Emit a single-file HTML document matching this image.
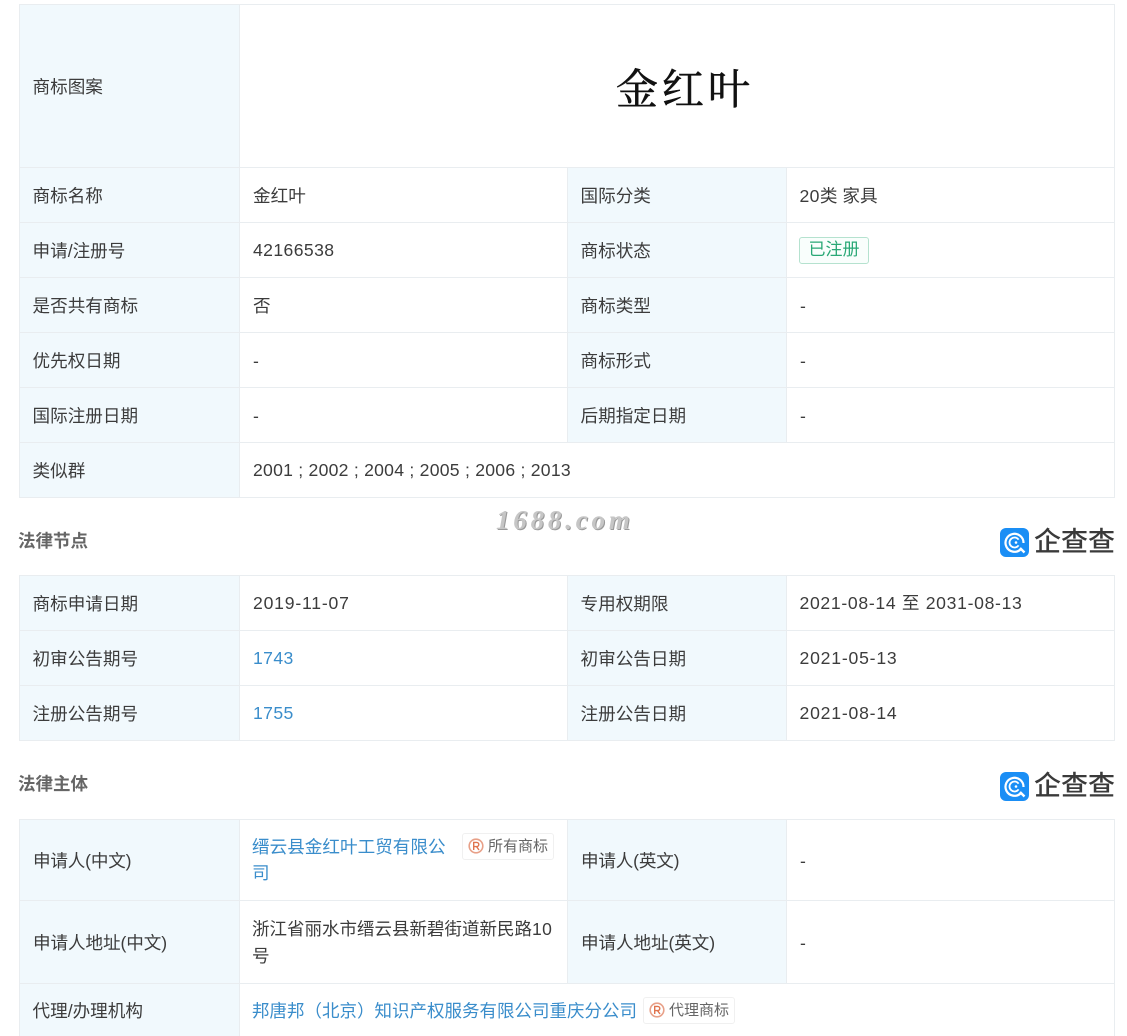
<!DOCTYPE html>
<html lang="zh">
<head>
<meta charset="utf-8">
<style>
html,body{margin:0;padding:0;background:#fff}
body{position:relative;width:1127px;height:1036px;overflow:hidden;font-family:"Liberation Sans","Noto Sans CJK SC",sans-serif;font-size:17.6px;color:#3c3c3c}
.b{position:absolute;background:#f1f9fd}
.h,.v{position:absolute;background:#e9edf0}
.h{height:1px}.v{width:1px}
.t{position:absolute;white-space:nowrap;line-height:26px;height:26px}
.n{letter-spacing:.4px}
.t.n{transform:translateY(-1px)}
.d{letter-spacing:.8px}
.l{color:#3a8dcb}
.f{font-size:17.5px}
.s{position:absolute;font-weight:700;color:#666;line-height:24px;white-space:nowrap;font-size:17.5px}
.q{position:absolute;left:1034px;font-size:27px;line-height:32px;color:#3a3a3a;white-space:nowrap;font-weight:500}
.tag{position:absolute;box-sizing:border-box;border:1px solid #f0f0f0;border-radius:3px;background:#fff;color:#666;font-size:15px;line-height:24px;height:27px;white-space:nowrap}
.tag svg{position:absolute;left:4px;top:3px}
.tag span{position:absolute;left:25px;top:1px}
</style>
</head>
<body>
<!-- Table 1 -->
<div class="b" style="left:19px;top:4px;width:220px;height:493px"></div>
<div class="b" style="left:567px;top:167px;width:219px;height:275px"></div>
<div class="h" style="left:19px;top:4px;width:1096px"></div>
<div class="h" style="left:19px;top:167px;width:1096px"></div>
<div class="h" style="left:19px;top:222px;width:1096px"></div>
<div class="h" style="left:19px;top:277px;width:1096px"></div>
<div class="h" style="left:19px;top:332px;width:1096px"></div>
<div class="h" style="left:19px;top:387px;width:1096px"></div>
<div class="h" style="left:19px;top:442px;width:1096px"></div>
<div class="h" style="left:19px;top:497px;width:1096px"></div>
<div class="v" style="left:19px;top:4px;height:494px"></div>
<div class="v" style="left:239px;top:4px;height:494px"></div>
<div class="v" style="left:567px;top:167px;height:275px"></div>
<div class="v" style="left:786px;top:167px;height:275px"></div>
<div class="v" style="left:1114px;top:4px;height:494px"></div>

<div class="t" style="left:32.5px;top:74px">商标图案</div>
<div style="position:absolute;left:616px;top:57px;font-family:'Noto Serif CJK SC',serif;font-size:42px;line-height:60px;color:#111;letter-spacing:4px;white-space:nowrap;-webkit-text-stroke:.6px #111">金红叶</div>

<div class="t" style="left:32.5px;top:183px">商标名称</div>
<div class="t" style="left:253px;top:183px">金红叶</div>
<div class="t" style="left:580.5px;top:183px">国际分类</div>
<div class="t" style="left:799.5px;top:183px"><span class="n">20</span>类 家具</div>

<div class="t" style="left:32.5px;top:238px">申请/注册号</div>
<div class="t n" style="left:253px;top:238px">42166538</div>
<div class="t" style="left:580.5px;top:238px">商标状态</div>
<div style="position:absolute;left:799px;top:237px;width:70px;height:27px;box-sizing:border-box;border:1px solid #b5e2cf;border-radius:3px;background:#f9fefc;color:#2aa876;text-align:center;line-height:24px;font-size:17px">已注册</div>

<div class="t" style="left:32.5px;top:293px">是否共有商标</div>
<div class="t" style="left:253px;top:293px">否</div>
<div class="t" style="left:580.5px;top:293px">商标类型</div>
<div class="t" style="left:800px;top:293px">-</div>

<div class="t" style="left:32.5px;top:348px">优先权日期</div>
<div class="t" style="left:253px;top:348px">-</div>
<div class="t" style="left:580.5px;top:348px">商标形式</div>
<div class="t" style="left:800px;top:348px">-</div>

<div class="t" style="left:32.5px;top:403px">国际注册日期</div>
<div class="t" style="left:253px;top:403px">-</div>
<div class="t" style="left:580.5px;top:403px">后期指定日期</div>
<div class="t" style="left:800px;top:403px">-</div>

<div class="t" style="left:32.5px;top:458px">类似群</div>
<div class="t n" style="left:253px;top:458px;letter-spacing:.25px">2001 ; 2002 ; 2004 ; 2005 ; 2006 ; 2013</div>

<!-- watermark -->
<div style="position:absolute;left:496px;top:505px;font-family:'Liberation Serif',serif;font-style:italic;font-weight:700;font-size:27px;line-height:30px;letter-spacing:3.8px;color:#c6c6c6;text-shadow:1px 1px 0 #9a9a9a;white-space:nowrap">1688.com</div>

<!-- Section 1 -->
<div class="s" style="left:18px;top:529px">法律节点</div>
<svg style="position:absolute;left:1000px;top:528px" width="29" height="29" viewBox="0 0 29 29"><rect width="29" height="29" rx="6" fill="#1a8ef5"/><path d="M20.5 21.5A9 9 0 1 1 23.5 15" fill="none" stroke="#fff" stroke-width="2.2"/><path d="M18.6 11.6a5 5 0 1 0 0 5.8" fill="none" stroke="#fff" stroke-width="1.8"/><path d="M20 20l4.5 4.5" stroke="#fff" stroke-width="2.4"/><circle cx="16" cy="14.5" r="1.3" fill="#fff"/></svg>
<div class="q" style="top:526px">企查查</div>

<!-- Table 2 -->
<div class="b" style="left:19px;top:575px;width:220px;height:165px"></div>
<div class="b" style="left:567px;top:575px;width:219px;height:165px"></div>
<div class="h" style="left:19px;top:575px;width:1096px"></div>
<div class="h" style="left:19px;top:630px;width:1096px"></div>
<div class="h" style="left:19px;top:685px;width:1096px"></div>
<div class="h" style="left:19px;top:740px;width:1096px"></div>
<div class="v" style="left:19px;top:575px;height:166px"></div>
<div class="v" style="left:239px;top:575px;height:166px"></div>
<div class="v" style="left:567px;top:575px;height:166px"></div>
<div class="v" style="left:786px;top:575px;height:166px"></div>
<div class="v" style="left:1114px;top:575px;height:166px"></div>

<div class="t" style="left:32.5px;top:591px">商标申请日期</div>
<div class="t n d" style="left:253px;top:591px">2019-11-07</div>
<div class="t" style="left:580.5px;top:591px">专用权期限</div>
<div class="t n" style="left:799.5px;top:591px;letter-spacing:.68px">2021-08-14 至 2031-08-13</div>

<div class="t" style="left:32.5px;top:646px">初审公告期号</div>
<div class="t n l" style="left:253px;top:646px">1743</div>
<div class="t" style="left:580.5px;top:646px">初审公告日期</div>
<div class="t n d" style="left:799.5px;top:646px">2021-05-13</div>

<div class="t" style="left:32.5px;top:701px">注册公告期号</div>
<div class="t n l" style="left:253px;top:701px">1755</div>
<div class="t" style="left:580.5px;top:701px">注册公告日期</div>
<div class="t n d" style="left:799.5px;top:701px">2021-08-14</div>

<!-- Section 2 -->
<div class="s" style="left:18px;top:772px">法律主体</div>
<svg style="position:absolute;left:1000px;top:772px" width="29" height="29" viewBox="0 0 29 29"><rect width="29" height="29" rx="6" fill="#1a8ef5"/><path d="M20.5 21.5A9 9 0 1 1 23.5 15" fill="none" stroke="#fff" stroke-width="2.2"/><path d="M18.6 11.6a5 5 0 1 0 0 5.8" fill="none" stroke="#fff" stroke-width="1.8"/><path d="M20 20l4.5 4.5" stroke="#fff" stroke-width="2.4"/><circle cx="16" cy="14.5" r="1.3" fill="#fff"/></svg>
<div class="q" style="top:770px">企查查</div>

<!-- Table 3 -->
<div class="b" style="left:19px;top:819px;width:220px;height:217px"></div>
<div class="b" style="left:567px;top:819px;width:219px;height:164px"></div>
<div class="h" style="left:19px;top:819px;width:1096px"></div>
<div class="h" style="left:19px;top:900px;width:1096px"></div>
<div class="h" style="left:19px;top:983px;width:1096px"></div>
<div class="v" style="left:19px;top:819px;height:217px"></div>
<div class="v" style="left:239px;top:819px;height:217px"></div>
<div class="v" style="left:567px;top:819px;height:164px"></div>
<div class="v" style="left:786px;top:819px;height:164px"></div>
<div class="v" style="left:1114px;top:819px;height:217px"></div>

<div class="t" style="left:33px;top:848px;letter-spacing:-.2px">申请人(中文)</div>
<div class="t l" style="left:252px;top:834px">缙云县金红叶工贸有限公</div>
<div class="t l" style="left:252px;top:860px">司</div>
<div class="tag" style="left:462px;top:833px;width:92px">
<svg width="18" height="18" viewBox="0 0 18 18"><circle cx="9" cy="9" r="6.8" fill="none" stroke="#e8a088" stroke-width="1.6"/><path d="M6.7 13V5.4h3a2 2 0 0 1 0 4.2h-3M9.5 9.600L12 13" fill="none" stroke="#e0734d" stroke-width="1.4"/></svg>
<span>所有商标</span></div>
<div class="t" style="left:581px;top:848px;letter-spacing:-.2px">申请人(英文)</div>
<div class="t" style="left:800px;top:848px">-</div>

<div class="t" style="left:33px;top:930px;letter-spacing:-.1px">申请人地址(中文)</div>
<div class="t f" style="left:252px;top:916px">浙江省丽水市缙云县新碧街道新民路<span class="n">10</span></div>
<div class="t" style="left:252px;top:943px">号</div>
<div class="t" style="left:581px;top:930px;letter-spacing:-.1px">申请人地址(英文)</div>
<div class="t" style="left:800px;top:930px">-</div>

<div class="t" style="left:32.5px;top:998px">代理/办理机构</div>
<div class="t l f" style="left:252px;top:998px">邦唐邦（北京）知识产权服务有限公司重庆分公司</div>
<div class="tag" style="left:643px;top:997px;width:92px">
<svg width="18" height="18" viewBox="0 0 18 18"><circle cx="9" cy="9" r="6.8" fill="none" stroke="#e8a088" stroke-width="1.6"/><path d="M6.7 13V5.4h3a2 2 0 0 1 0 4.2h-3M9.5 9.600L12 13" fill="none" stroke="#e0734d" stroke-width="1.4"/></svg>
<span>代理商标</span></div>
</body>
</html>
